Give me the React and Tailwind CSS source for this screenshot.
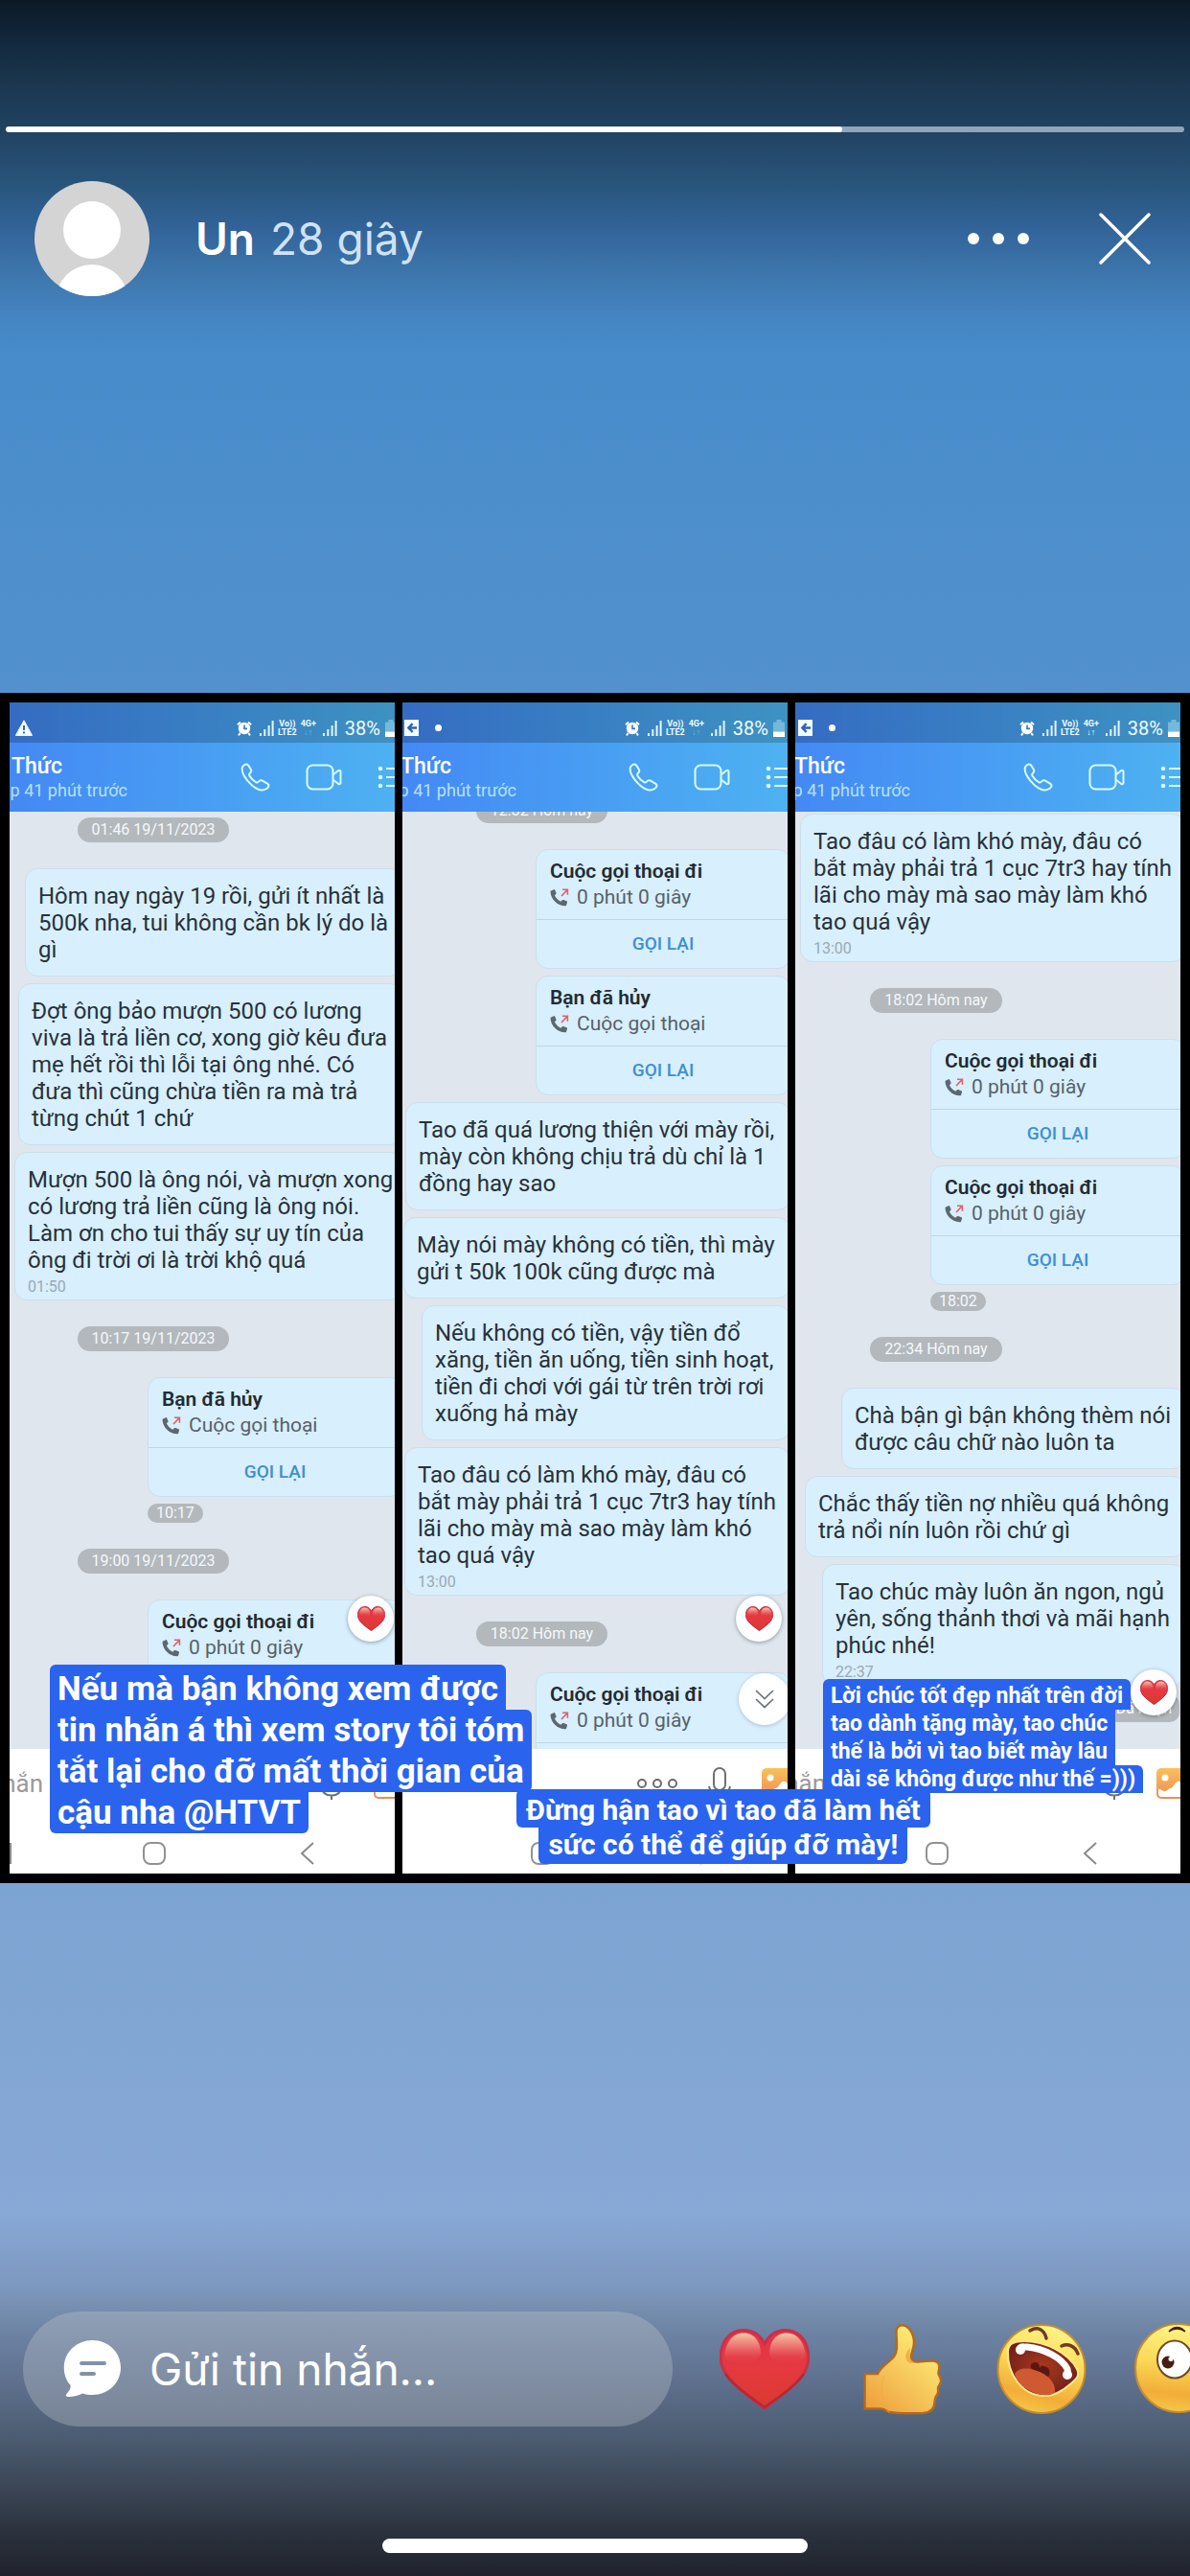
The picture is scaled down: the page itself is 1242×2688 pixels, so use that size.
import React from "react";

const roboto = "font-['Roboto','Noto_Sans',sans-serif]";

/* ---------- small icons ---------- */

const Alarm = () => (
  <svg width="16" height="18" viewBox="0 0 16 18" fill="none" stroke="#fff">
    <circle cx="8" cy="9" r="6.2" fill="#fff" stroke="none" />
    <path d="M1 5.2 4 2.4M15 5.2 12 2.4M3.6 14 2 16.4M12.4 14l1.6 2.4" strokeWidth="2" />
    <path d="M8 5.4V9.4H11" stroke="#3a74c0" strokeWidth="1.6" />
  </svg>
);

const Signal = () => (
  <svg width="15" height="16" viewBox="0 0 15 16" fill="#e4f6fb">
    <rect x="0" y="13" width="2" height="3" />
    <rect x="4.3" y="9" width="2" height="7" />
    <rect x="8.6" y="5" width="2" height="11" />
    <rect x="12.6" y="0" width="2" height="16" />
  </svg>
);

const Battery = () => (
  <svg width="12" height="18" viewBox="0 0 12 18">
    <path d="M3.5 0h5v2.4H12V18H0V2.4h3.5z" fill="#74b9da" />
    <rect y="12.6" width="12" height="5.4" fill="#fff" />
  </svg>
);

const Warning = () => (
  <svg width="18" height="17" viewBox="0 0 18 17">
    <path d="M9 .8 17.6 16.4H.4z" fill="#f2fbff" stroke="#f2fbff" strokeLinejoin="round" />
    <path d="M9 6v5M9 12.6v1.8" stroke="#3468b8" strokeWidth="2" />
  </svg>
);

const ShareBox = () => (
  <svg width="16" height="17" viewBox="0 0 16 17">
    <rect width="15" height="17" fill="#f2fbff" />
    <path d="M13 8.5H5M8.6 4.2 4.4 8.5l4.2 4.3" stroke="#2f62b0" strokeWidth="2.4" fill="none" />
  </svg>
);

const PhoneOutline = () => (
  <svg width="31" height="30" viewBox="0 0 31 30" fill="none" stroke="#d9fbfd" strokeWidth="2" strokeLinejoin="round">
    <path d="M2 4.4C4 1.4 6.4.6 8.2 2.6l2.6 4.2c.9 1.6.5 2.8-1 4.2-1 1-.9 1.7-.2 2.9 1.7 2.7 3.7 4.700 6.500 6.200 1 .6 1.700.5 2.500-.3 1.500-1.700 3.200-2 4.800-1l4.600 2.900c2 1.300 2 2.700.2 4.500-3.800 3.400-9.700 2.600-16.200-2.800C5 17.500.4 9.500 2 4.400z" />
  </svg>
);

const Camera = () => (
  <svg width="38" height="28" viewBox="0 0 38 28" fill="none" stroke="#d9fbfd" strokeWidth="2" strokeLinejoin="round">
    <rect x="1.500" y="1.500" width="27" height="25" rx="6" />
    <path d="M28.500 11.500l5.500-4.300c1.200-.8 2.500-.4 2.500 1v11.600c0 1.400-1.300 1.800-2.500 1l-5.500-4.300" />
  </svg>
);

const Menu = () => (
  <svg width="36" height="24" viewBox="0 0 36 24" fill="#d9fbfd">
    <circle cx="3" cy="3" r="2.300" />
    <circle cx="3" cy="12" r="2.300" />
    <circle cx="3" cy="21" r="2.300" />
    <path d="M9 2h26v2H9zM9 11h26v2H9zM9 20h26v2H9z" />
  </svg>
);

const CallIcon = () => (
  <svg width="20" height="20" viewBox="0 0 20 20" fill="none">
    <path
      d="M1.200 2.600 4 1.200c.6-.2 1 0 1.200.5l1.300 3c.2.500.1.900-.3 1.300L4.900 7.200c1.300 2.900 3.300 5 6.400 6.600l1.500-1.500c.4-.4.8-.5 1.300-.3l3.300 1.300c.600.200.800.700.600 1.300l-.9 2.800c-.2.600-.6.900-1.200.9C7.600 18 1 11.500.5 3.700c0-.5.2-.9.700-1.100z"
      fill="#5b6870"
    />
    <path d="M12 8 18 1.600M13 1.200h5.400v5.600" stroke="#e0606c" strokeWidth="1.600" />
  </svg>
);

const HeartShape = ({ className, id }) => (
  <svg viewBox="0 0 94 85" className={className}>
    <defs>
      <linearGradient id={`${id}f`} x1="0" y1="0" x2="0" y2="1">
        <stop offset="0" stopColor="#e0364d" />
        <stop offset=".5" stopColor="#e5383f" />
        <stop offset="1" stopColor="#d93a30" />
      </linearGradient>
      <linearGradient id={`${id}g`} x1="0" y1="0" x2="0" y2="1">
        <stop offset="0" stopColor="#f6c9a4" />
        <stop offset=".45" stopColor="#ee8078" stopOpacity=".8" />
        <stop offset="1" stopColor="#e5383f" stopOpacity="0" />
      </linearGradient>
    </defs>
    <path
      d="M47 83C33 72 20 64 10 52 2 42 0 33 1.500 24 4 9 14 1.500 25 1.500c10 0 17.500 5 22 14.500 4.500-9.500 12-14.500 22-14.500 11 0 21 7.500 23.500 22.500C94 33 92 42 84 52 74 64 61 72 47 83z"
      fill={`url(#${id}f)`}
      stroke="#c9304a"
      strokeWidth="3"
    />
    <path d="M5 28C7 13 14 4.500 25 4.500c12 0 18 10 18 22-5 13-32 15-38 1.500z" fill={`url(#${id}g)`} />
    <path d="M52 26.500c0-12 6-22 18-22 11 0 18 8.500 20 23.500-6 13.500-33 11.500-38-1.500z" fill={`url(#${id}g)`} />
    <path d="M6 47c9 13 26 24 41 35 15-11 32-22 41-35" fill="none" stroke="#a8262a" strokeWidth="2.500" opacity=".65" />
  </svg>
);

/* ---------- chat pieces ---------- */

const Stamp = ({ children }) => (
  <div className="my-5 flex w-full justify-center pr-[105px]">
    <time className="flex h-[26px] items-center rounded-full bg-[#b3b8bd] px-[15px] text-[16px] leading-none whitespace-nowrap text-[#f5f8fa]">
      {children}
    </time>
  </div>
);

const TimeTag = ({ children }) => (
  <div className="flex w-[266px]">
    <time className="flex h-5 items-center rounded-full bg-[#b3b8bd] px-[9px] text-[16px] leading-none text-[#f5f8fa]">
      {children}
    </time>
  </div>
);

const Bubble = ({ lines, time, width }) => (
  <article
    className={`${width} rounded-[13px] border border-[#cbdfea] bg-[#d8effd] pt-3.5 pl-[13px] text-[24px] leading-[28px] text-[#27323a] ${time ? "pb-[3px]" : "pb-[13px]"}`}
  >
    {lines.map((line) => (
      <p key={line} className="whitespace-nowrap">
        {line}
      </p>
    ))}
    {time && <time className="mt-1 block text-[16px] leading-[20px] text-[#9aa9b3]">{time}</time>}
  </article>
);

const Call = ({ title, detail }) => (
  <article className="w-[266px] shrink-0 rounded-[13px] border border-[#cbdfea] bg-[#d8effd]">
    <div className="h-[73px] border-b border-[#bfd7e4] pt-[9px] pl-3.5 leading-[27px]">
      <h3 className="text-[21px] font-semibold text-[#232b32]">{title}</h3>
      <p className="flex items-center gap-2 text-[21px] text-[#56626a]">
        <CallIcon />
        {detail}
      </p>
    </div>
    <button className="h-[50px] w-full text-[19px] font-medium text-[#3d90d4]">GỌI LẠI</button>
  </article>
);

const outgoing = { type: "call", title: "Cuộc gọi thoại đi", detail: "0 phút 0 giây" };
const cancelled = { type: "call", title: "Bạn đã hủy", detail: "Cuộc gọi thoại" };
const hardLines = [
  "Tao đâu có làm khó mày, đâu có",
  "bắt mày phải trả 1 cục 7tr3 hay tính",
  "lãi cho mày mà sao mày làm khó",
  "tao quá vậy",
];

const screens = [
  {
    shift: "-ml-[5px] -mr-[8px]",
    start: "-mt-3.5",
    warning: true,
    heart: "top-[818px]",
    items: [
      { type: "stamp", text: "01:46 19/11/2023" },
      {
        type: "text",
        width: "w-[394px]",
        lines: ["Hôm nay ngày 19 rồi, gửi ít nhất là", "500k nha, tui không cần bk lý do là", "gì"],
      },
      {
        type: "text",
        width: "w-[401px]",
        lines: [
          "Đợt ông bảo mượn 500 có lương",
          "viva là trả liền cơ, xong giờ kêu đưa",
          "mẹ hết rồi thì lỗi tại ông nhé. Có",
          "đưa thì cũng chừa tiền ra mà trả",
          "từng chút 1 chứ",
        ],
      },
      {
        type: "text",
        width: "w-[405px]",
        time: "01:50",
        lines: [
          "Mượn 500 là ông nói, và mượn xong",
          "có lương trả liền cũng là ông nói.",
          "Làm ơn cho tui thấy sự uy tín của",
          "ông đi trời ơi là trời khộ quá",
        ],
      },
      { type: "stamp", text: "10:17 19/11/2023" },
      cancelled,
      { type: "tag", text: "10:17" },
      { type: "stamp", text: "19:00 19/11/2023" },
      outgoing,
    ],
  },
  {
    shift: "-ml-[9px] -mr-[3px]",
    start: "-mt-[34px]",
    scroller: true,
    heart: "top-[818px]",
    items: [
      { type: "stamp", text: "12:32 Hôm nay" },
      outgoing,
      cancelled,
      {
        type: "text",
        width: "w-[402px]",
        lines: ["Tao đã quá lương thiện với mày rồi,", "mày còn không chịu trả dù chỉ là 1", "đồng hay sao"],
      },
      { type: "text", width: "w-[404px]", lines: ["Mày nói mày không có tiền, thì mày", "gửi t 50k 100k cũng được mà"] },
      {
        type: "text",
        width: "w-[385px]",
        lines: [
          "Nếu không có tiền, vậy tiền đổ",
          "xăng, tiền ăn uống, tiền sinh hoạt,",
          "tiền đi chơi với gái từ trên trời rơi",
          "xuống hả mày",
        ],
      },
      { type: "text", width: "w-[403px]", time: "13:00", lines: hardLines },
      { type: "stamp", text: "18:02 Hôm nay" },
      outgoing,
    ],
  },
  {
    shift: "-ml-[8px] -mr-[5px]",
    start: "mt-0.5",
    received: true,
    heart: "top-[895px]",
    items: [
      { type: "text", width: "w-[402px]", time: "13:00", lines: hardLines },
      { type: "stamp", text: "18:02 Hôm nay" },
      outgoing,
      outgoing,
      { type: "tag", text: "18:02" },
      { type: "stamp", text: "22:34 Hôm nay" },
      { type: "text", width: "w-[359px]", lines: ["Chà bận gì bận không thèm nói", "được câu chữ nào luôn ta"] },
      { type: "text", width: "w-[397px]", lines: ["Chắc thấy tiền nợ nhiều quá không", "trả nổi nín luôn rồi chứ gì"] },
      {
        type: "text",
        width: "w-[379px]",
        time: "22:37",
        lines: ["Tao chúc mày luôn ăn ngon, ngủ", "yên, sống thảnh thơi và mãi hạnh", "phúc nhé!"],
      },
    ],
  },
];

function Item({ item }) {
  if (item.type === "stamp") return <Stamp>{item.text}</Stamp>;
  if (item.type === "tag") return <TimeTag>{item.text}</TimeTag>;
  if (item.type === "call") return <Call title={item.title} detail={item.detail} />;
  return <Bubble lines={item.lines} time={item.time} width={item.width} />;
}

function Screen({ screen, index }) {
  return (
    <section className="min-w-0 overflow-hidden bg-[#e0e6ee]">
      <div className={screen.shift}>
        <div className="flex h-[42px] items-end justify-between bg-linear-to-r from-[#356bc2] to-[#3e92c2] pr-[6px] pb-[5px] pl-[11px] text-[#f0fbff]">
          <div className="flex items-center gap-4 pb-0.5">
            {screen.warning ? <Warning /> : <ShareBox />}
            {!screen.warning && <span className="size-[7px] rounded-full bg-white" />}
          </div>
          <div className="flex items-center">
            <Alarm />
            <span className="ml-2">
              <Signal />
            </span>
            <span className="ml-1 text-center text-[9px] leading-[9px] font-bold">
              Vo))
              <br />
              LTE2
            </span>
            <span className="ml-1 text-center text-[9px] leading-[9px] font-bold">
              4G+
              <br />
              <span className={screen.received ? "text-white" : "text-[#6db4dd]"}>↓↑</span>
            </span>
            <span className="ml-[7px]">
              <Signal />
            </span>
            <span className="ml-2 text-[20px] leading-5">38%</span>
            <span className="ml-[5px]">
              <Battery />
            </span>
          </div>
        </div>

        <header className="flex h-[72px] bg-linear-to-r from-[#4488f4] to-[#4eb2f1]">
          <div className="min-w-0 flex-1 pt-[11px] pl-[7px] whitespace-nowrap">
            <h2 className="text-[23px] leading-[28px] font-medium text-white">Thức</h2>
            <p className="flex w-[121px] justify-end text-[18px] leading-[22px] text-[#b5e1fb]">Truy cập 41 phút trước</p>
          </div>
          <div className="flex items-center gap-[37px]">
            <button aria-label="Gọi thoại">
              <PhoneOutline />
            </button>
            <button aria-label="Gọi video">
              <Camera />
            </button>
            <button aria-label="Tùy chọn" className="-mr-2.5">
              <Menu />
            </button>
          </div>
        </header>

        <div className="relative h-[978px] overflow-hidden">
          <div className={`${screen.start} flex flex-col items-end gap-[7px]`}>
            {screen.items.map((item, i) => (
              <Item key={i} item={item} />
            ))}
          </div>
          {screen.received && (
            <span className="absolute top-[921px] right-[6px] rounded-[10px] bg-[#b3b8bd] px-2 text-[16px] leading-[29px] text-white">
              Đã nhận
            </span>
          )}
          <button
            aria-label="Thả tim"
            className={`absolute right-[9px] ${screen.heart} flex size-12 items-center justify-center rounded-full bg-[#fbfdfe] shadow-[0_1px_4px_rgba(0,0,0,0.35)]`}
          >
            <HeartShape className="w-[29px]" id={`h${index}`} />
          </button>
          {screen.scroller && (
            <button
              aria-label="Xuống cuối"
              className="absolute top-[899px] right-0 flex size-[54px] items-center justify-center rounded-full bg-white shadow-[0_1px_4px_rgba(0,0,0,0.2)]"
            >
              <svg width="20" height="20" viewBox="0 0 20 20" fill="none" stroke="#6c7378" strokeWidth="1.700">
                <path d="M1 1l9 8.500L19 1M1 10l9 8.500L19 10" />
              </svg>
            </button>
          )}
        </div>

        <div className="bg-white">
          <div className="flex h-[72px] items-center">
            <input
              aria-label="Tin nhắn"
              placeholder="Tin nhắn"
              className="-ml-[80px] w-[120px] text-right text-[26px] placeholder:text-[#9a9a9a]"
            />
            <div className="ml-auto flex items-center gap-[30px]">
              <button aria-label="Thêm">
                <svg width="44" height="12" viewBox="0 0 44 12" fill="none" stroke="#6c6c6c" strokeWidth="2">
                  <circle cx="6" cy="6" r="4" />
                  <circle cx="22" cy="6" r="4" />
                  <circle cx="38" cy="6" r="4" />
                </svg>
              </button>
              <button aria-label="Ghi âm">
                <svg width="26" height="36" viewBox="0 0 26 36" fill="none" stroke="#707070" strokeWidth="2">
                  <rect x="7" y="2" width="12" height="23" rx="6" />
                  <path d="M2 21c1 6 5 9.500 11 9.500S23 27 24 21M13 30.500V35" />
                </svg>
              </button>
              <button aria-label="Ảnh" className="-mr-[3px]">
                <svg width="34" height="34" viewBox="0 0 34 34">
                  <defs>
                    <linearGradient id={`photo${index}`} x1="0" y1="0" x2="0" y2="1">
                      <stop offset="0" stopColor="#f9c15a" />
                      <stop offset="1" stopColor="#ee8a55" />
                    </linearGradient>
                  </defs>
                  <rect x="1" y="1" width="32" height="32" rx="5" fill={`url(#photo${index})`} />
                  <circle cx="10" cy="11" r="3.500" fill="#fff" />
                  <path d="M3 23c3-1 4 3 7 2 4-1 3-3 6-3 3-1 4-6 7-7 4-1 5 4 8 4v8c0 3-1 4-4 4H7c-3 0-4-1-4-4z" fill="#fff" />
                </svg>
              </button>
            </div>
          </div>
          <nav className="flex h-[58px] items-center justify-between pt-4 pr-[91px]">
            <button aria-label="Gần đây">
              <svg width="8" height="24" viewBox="0 0 8 24" stroke="#8a8a8a" strokeWidth="2">
                <path d="M6 1v22" />
              </svg>
            </button>
            <button aria-label="Màn hình chính" className="mr-[5px]">
              <svg width="26" height="24" viewBox="0 0 26 24" fill="none" stroke="#929292" strokeWidth="2">
                <rect x="2" y="1" width="22" height="22" rx="7" />
              </svg>
            </button>
            <button aria-label="Quay lại">
              <svg width="16" height="24" viewBox="0 0 16 24" fill="none" stroke="#8a8a8a" strokeWidth="2">
                <path d="M14 1 2 12l12 11" />
              </svg>
            </button>
          </nav>
        </div>
      </div>
    </section>
  );
}

/* ---------- reactions ---------- */

const Thumb = () => (
  <svg width="83" height="95" viewBox="0 0 83 95">
    <defs>
      <linearGradient id="thumb" x1="0" y1="1" x2=".7" y2="0">
        <stop offset="0" stopColor="#ee9a35" />
        <stop offset=".4" stopColor="#f4bd55" />
        <stop offset="1" stopColor="#fff077" />
      </linearGradient>
    </defs>
    <path
      d="M1.500 52H15c3-8 12-12 17-18 5-6 2-18 2.500-27C35 2 39 1 42 1.500c6 1 11 9 11 18 0 7-4 12-3 17 2 4 6 3 12 2.500 7-.5 15-2 17 3 1.500 4-1 7-.5 10 1 3 3 4 2.500 8-.5 4-3 4-3 7s1 4-1 7c-2 3-2 3-2.500 8-.5 7-5 10.500-12 11-14 .500-27 .500-35-1-4-1-4-3-9-3.500H1.500z"
      fill="url(#thumb)"
      stroke="#b06a23"
      strokeWidth="2.500"
      strokeLinejoin="round"
    />
    <path d="M49 25c-6 5-7 13 0 16h8c-8-1-9-6-8-16z" fill="#eba53e" opacity=".75" />
    <path d="M21 54c-4 18-1 30 6 38" fill="none" stroke="#f1a844" strokeWidth="2" opacity=".5" />
  </svg>
);

const faceStops = (
  <>
    <stop offset="0" stopColor="#fff58a" />
    <stop offset=".45" stopColor="#fbd956" />
    <stop offset=".8" stopColor="#f2ad38" />
    <stop offset="1" stopColor="#f6c646" />
  </>
);

const Laugh = () => (
  <svg width="94" height="96" viewBox="0 0 94 96">
    <defs>
      <linearGradient id="laugh" x1=".65" y1="0" x2=".4" y2="1">
        {faceStops}
      </linearGradient>
      <radialGradient id="mouth" cx=".5" cy=".45" r=".6">
        <stop offset="0" stopColor="#a8381c" />
        <stop offset="1" stopColor="#6e1f1c" />
      </radialGradient>
    </defs>
    <ellipse cx="47" cy="48" rx="45.500" ry="46" fill="url(#laugh)" stroke="#c08d35" strokeWidth="2" />
    <path
      d="M12 30c0-9 7-11 17-11 22 0 46 12 55 29 3 7 0 10-6 15-9 8-17 13-28 13-23 0-39-23-38-46z"
      fill="url(#mouth)"
      stroke="#ffe98a"
      strokeWidth="2"
    />
    <path d="M37 48c-3-3-1-7 4-7 3 0 4 3 4 6 2-2 1-3 4-2 7 1 8 7 5 11z" fill="#5c1712" />
    <path d="M19 53c3-5 11-7 20-4 13 3 23 13 22 22 0 3-5 5-13 4-14-2-27-12-29-22z" fill="#cf5a32" />
    <path d="M24 27c1-3 3-2 8-2 18 2 36 11 42 23 1 3 0 5 0 7" fill="none" stroke="#fff" strokeWidth="7" strokeLinecap="round" />
    <circle cx="25" cy="28" r="5" fill="#fff" />
    <circle cx="74" cy="54" r="5" fill="#fff" />
    <path d="M35 8c8-5 15-1 17 8M68 24c7-3 14 0 17 8" fill="none" stroke="#713a20" strokeWidth="3.500" strokeLinecap="round" />
  </svg>
);

const Wow = () => (
  <svg width="94" height="96" viewBox="0 0 94 96">
    <defs>
      <linearGradient id="wow" x1=".6" y1="0" x2=".5" y2="1">
        {faceStops}
      </linearGradient>
    </defs>
    <ellipse cx="46" cy="47" rx="45" ry="46" fill="url(#wow)" stroke="#c08d35" strokeWidth="2" />
    <ellipse cx="42" cy="38" rx="18" ry="19.500" fill="#fff" stroke="#6d4b29" strokeWidth="2" />
    <circle cx="35" cy="41" r="6.500" fill="#4a1d12" />
    <circle cx="38" cy="37.500" r="2.500" fill="#fff" />
    <path d="M36 9c5-6 12-6 17 0-5-4-12-4-17 0z" fill="#4a1d12" stroke="#4a1d12" strokeWidth="1.500" />
    <ellipse cx="78" cy="38" rx="14" ry="18" fill="#fff" stroke="#6d4b29" strokeWidth="2" />
  </svg>
);

/* ---------- page ---------- */

export default function App() {
  const progress = 71;
  return (
    <div className="grid min-h-screen grid-cols-[minmax(0,1fr)] grid-rows-[1fr_auto_1fr] overflow-hidden bg-[linear-gradient(to_bottom,#0b1926_0px,#12273c_40px,#1b3850_90px,#214364_140px,#285479_190px,#32649a_240px,#3e78ae_290px,#4484c2_330px,#488ccb_370px,#5291cd_720px,#7ca4d2_1965px,#88a8d6_2310px,#7d98c0_2385px,#748cab_2415px,#6a7e9f_2445px,#5a6b87_2500px,#4b5b70_2545px,#3a4454_2600px,#2c333e_2640px,#1f222b_2688px)] font-['Inter','Noto_Sans',sans-serif] text-white">
      <header>
        <div
          role="progressbar"
          aria-label="Tiến độ"
          aria-valuenow={progress}
          className="mx-1.5 mt-[132px] h-1.5 overflow-hidden rounded-full bg-[#8fa5b8]"
        >
          <div className="h-full rounded-full bg-white" style={{ width: `${progress}%` }} />
        </div>
        <div className="mt-[51px] flex items-center pr-10 pl-9">
          <svg width="120" height="120" viewBox="0 0 120 120" className="rounded-full">
            <rect width="120" height="120" fill="#d4d4d4" />
            <circle cx="60" cy="51" r="30" fill="#fff" />
            <ellipse cx="60" cy="125" rx="38" ry="38" fill="#fff" />
          </svg>
          <p className="ml-12 flex gap-4 text-[46px] leading-[56px]">
            <span className="font-semibold">Un</span>
            <span className="text-[#cfe2f3]">28 giây</span>
          </p>
          <button aria-label="Thêm" className="ml-auto">
            <svg width="68" height="14" viewBox="0 0 68 14" fill="#fff">
              <circle cx="7" cy="7" r="6" />
              <circle cx="33" cy="7" r="6" />
              <circle cx="59" cy="7" r="6" />
            </svg>
          </button>
          <button aria-label="Đóng" className="ml-[69px]">
            <svg width="56" height="56" viewBox="0 0 56 56" stroke="#fff" strokeWidth="3.500" strokeLinecap="round">
              <path d="M3 3l50 50M53 3 3 53" />
            </svg>
          </button>
        </div>
      </header>

      <main className={`${roboto} relative grid grid-cols-3 gap-2 bg-black p-2.5`}>
        {screens.map((screen, i) => (
          <Screen key={i} screen={screen} index={i} />
        ))}

        <div className="absolute bottom-[52px] left-[52px] flex flex-col items-start text-[35px] leading-[43px] font-bold whitespace-nowrap *:bg-[#2a64ee] *:px-2">
          <p className="rounded-t-md pt-1">Nếu mà bận không xem được</p>
          <p className="rounded-tr-md">tin nhắn á thì xem story tôi tóm</p>
          <p className="rounded-br-md">tắt lại cho đỡ mất thời gian của</p>
          <p className="rounded-b-md">cậu nha @HTVT</p>
        </div>

        <div className="absolute right-[49px] bottom-[94px] flex flex-col items-start text-[23px] leading-[29px] font-bold whitespace-nowrap *:bg-[#2a64ee] *:px-2">
          <p className="rounded-t-md pt-[3px]">Lời chúc tốt đẹp nhất trên đời</p>
          <p>tao dành tặng mày, tao chúc</p>
          <p>thế là bởi vì tao biết mày lâu</p>
          <p className="rounded-tr-md">dài sẽ không được như thế =)))</p>
        </div>

        <div className="absolute bottom-[20px] left-[539px] flex flex-col items-center text-[30px] leading-[36px] font-bold whitespace-nowrap *:bg-[#2a64ee] *:px-2.5">
          <p className="rounded-md pt-1">Đừng hận tao vì tao đã làm hết</p>
          <p className="rounded-b-md pb-0.5">sức có thể để giúp đỡ mày!</p>
        </div>
      </main>

      <footer className="flex flex-col justify-end">
        <div className="flex items-center pl-6">
          <label className="flex h-[120px] w-[678px] shrink-0 items-center rounded-full bg-[#bfc6cb]/35 pl-[42px]">
            <svg width="61" height="62" viewBox="0 0 61 62">
              <path
                d="M30.500 1C47 1 60 13.500 60 29.500S47 58 30.500 58c-4 0-7-.5-10-1.500C15 59 9 60.500 4.500 60c-2-.3-2-2-.8-3.200 3-3.300 4.500-6 3.800-9C3 43 .8 36.500.8 29.500.800 13.500 14 1 30.500 1z"
                fill="#fff"
              />
              <path d="M19 25h24M19 36h13" stroke="#8091ab" strokeWidth="4" strokeLinecap="round" />
            </svg>
            <input
              aria-label="Gửi tin nhắn"
              placeholder="Gửi tin nhắn..."
              className="ml-[29px] min-w-0 flex-1 bg-transparent text-[46px] leading-[56px] outline-none placeholder:text-white"
            />
          </label>
          <button aria-label="Yêu thích" className="ml-[49px] shrink-0">
            <HeartShape className="w-[94px]" id="big" />
          </button>
          <button aria-label="Thích" className="ml-[56px] shrink-0">
            <Thumb />
          </button>
          <button aria-label="Haha" className="ml-[56px] shrink-0">
            <Laugh />
          </button>
          <button aria-label="Wow" className="ml-[50px] shrink-0">
            <Wow />
          </button>
        </div>
        <div className="mx-auto mt-[117px] mb-6 h-[15px] w-[444px] rounded-full bg-white" />
      </footer>
    </div>
  );
}
